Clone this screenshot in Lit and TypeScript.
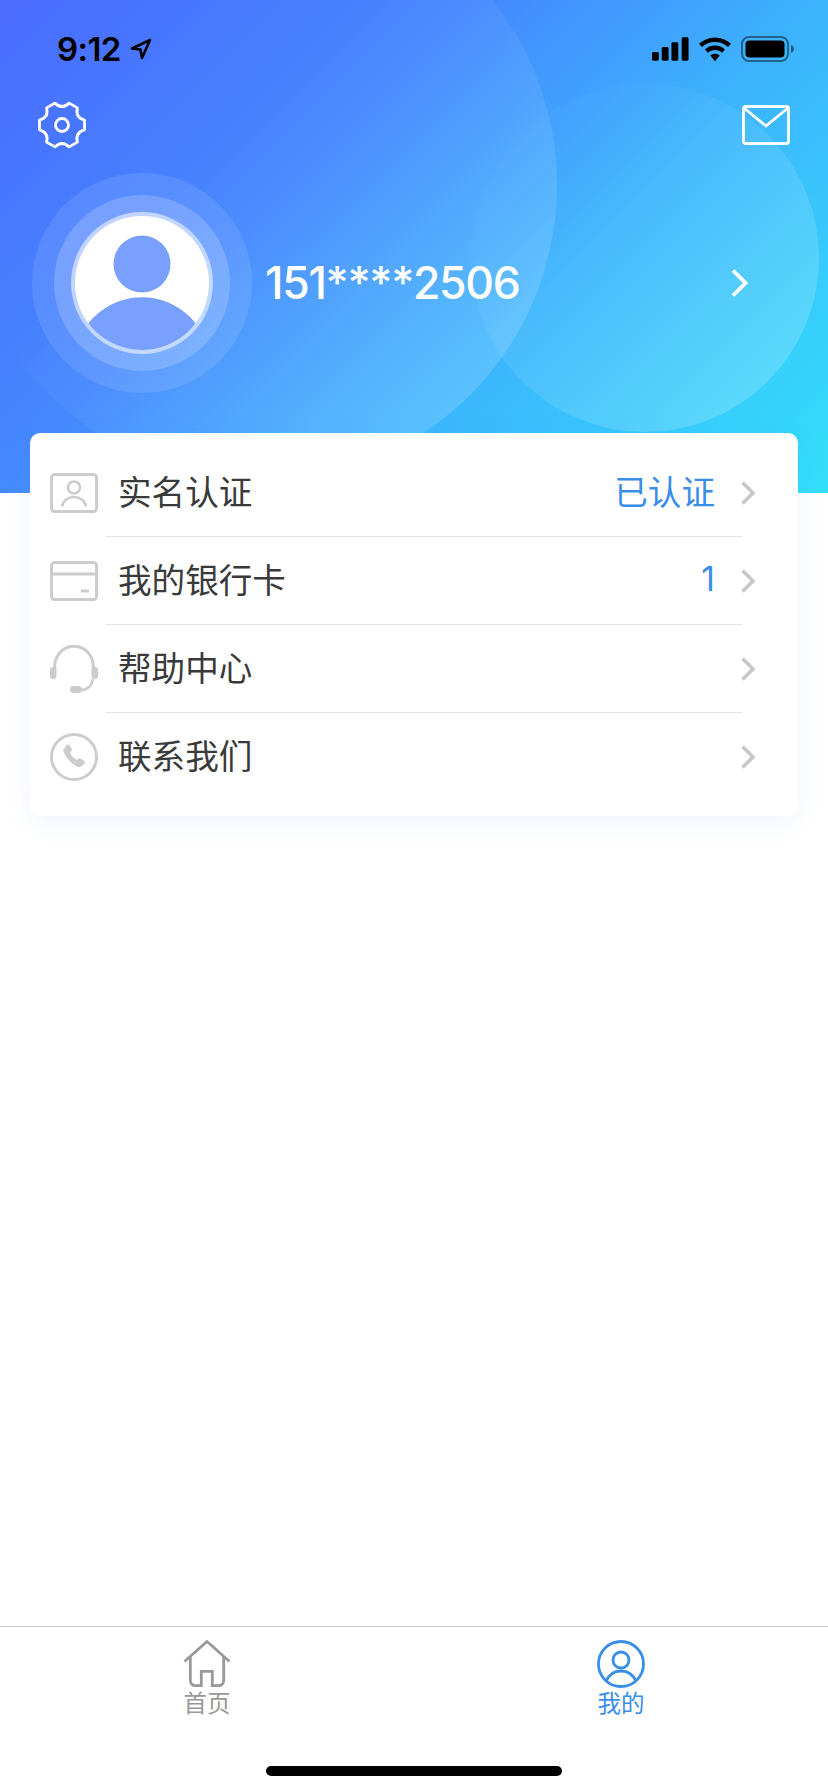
import { LitElement, html, css, svg } from "lit";
import { customElement } from "lit/decorators.js";

function gearPath(): string {
  const c = 24;
  const pt = (r: number, deg: number) => {
    const a = (deg * Math.PI) / 180;
    return `${(c + r * Math.cos(a)).toFixed(2)} ${(c + r * Math.sin(a)).toFixed(2)}`;
  };
  let d = "";
  for (let k = 0; k < 6; k++) {
    const a = 60 * k;
    d += k === 0 ? `M${pt(23, a - 12)}` : `L${pt(23, a - 12)}`;
    d += ` L${pt(23, a + 12)} Q${pt(15, a + 30)} ${pt(23, a + 48)} `;
  }
  return d + "Z";
}

const chevron = html`<svg class="chev" viewBox="0 0 16 26" width="16" height="26"><path d="M2.5 2.5 13 13 2.5 23.5" fill="none" stroke="#c7c7cc" stroke-width="3.6"/></svg>`;

const icons = {
  id: svg`<rect x="1.500" y="1.500" width="45" height="37" rx="3" fill="none" stroke="#ccc" stroke-width="2.900"/><circle cx="24" cy="14.500" r="6" fill="none" stroke="#ccc" stroke-width="2.500"/><path d="M12 33.500c1-6 6-9.500 12-9.500s11 3.500 12 9.500" fill="none" stroke="#ccc" stroke-width="2.500"/>`,
  card: svg`<rect x="1.500" y="1.500" width="45" height="37" rx="3" fill="none" stroke="#ccc" stroke-width="2.900"/><path d="M1.500 13h45" stroke="#ccc" stroke-width="2.900"/><path d="M31 30h8" stroke="#ccc" stroke-width="2.900"/>`,
  help: svg`<path d="M5 26C3 12 12 1.300 24 1.300S45 12 43 26" fill="none" stroke="#ccc" stroke-width="2.900"/><rect x="0" y="22" width="6.500" height="12" rx="3.200" fill="#ccc"/><rect x="41.500" y="22" width="6.500" height="12" rx="3.200" fill="#ccc"/><path d="M43 34c-1 6-5 11-12 11" fill="none" stroke="#ccc" stroke-width="2.600"/><rect x="20" y="41" width="12" height="7" rx="3.500" fill="#ccc"/>`,
  phone: svg`<circle cx="24" cy="24" r="22.500" fill="none" stroke="#ccc" stroke-width="2.900"/><path d="M14.500 15c-1 1-1.500 2-1 3.500 2 6 7.500 12 13.500 15 2 .8 3.500.8 5-.500l2.500-2.500c.8-.8.700-1.800-.2-2.500l-3.800-2.500c-.8-.5-1.500-.4-2.200.2l-1.300 1.300c-3-1.500-5.500-4-7-7.500l1.500-1.500c.6-.7.7-1.400.2-2.200l-2.500-3.800c-.7-.9-1.700-1-2.500-.2z" fill="#ccc"/>`,
};

interface Row { icon: keyof typeof icons; h: number; label: string; value?: string; }
const rows: Row[] = [
  { icon: "id", h: 40, label: "实名认证", value: "已认证" },
  { icon: "card", h: 40, label: "我的银行卡", value: "1" },
  { icon: "help", h: 48, label: "帮助中心" },
  { icon: "phone", h: 48, label: "联系我们" },
];

@customElement("app-root")
export class AppRoot extends LitElement {
  static styles = css`
    :host { display: block; width: 828px; height: 1792px; background: #fff; font-family: Inter, "Noto Sans CJK SC", sans-serif; overflow: hidden; }
    .page { height: 1792px; display: flex; flex-direction: column; position: relative; }
    .head { height: 493px; flex: none; position: relative; overflow: hidden; background: linear-gradient(135deg, #4a6bff 0%, #4588ff 36%, #3cb4fd 63%, #33dffa 100%); }
    .blob { position: absolute; border-radius: 50%; }
    .b1 { left: -37px; top: -112px; width: 594px; height: 594px; background: linear-gradient(135deg, rgba(255,255,255,0) 42%, rgba(255,255,255,0.17) 90%); }
    .b2 { left: 471px; top: 84px; width: 348px; height: 348px; background: linear-gradient(135deg, rgba(255,255,255,0.02) 25%, rgba(255,255,255,0.2) 92%); }
    .status { position: relative; height: 98px; display: flex; align-items: center; justify-content: space-between; padding: 0 34px 0 57px; color: #000; }
    .time { display: flex; align-items: center; gap: 9px; font-size: 33px; font-weight: 600; letter-spacing: -0.6px; }
    .sys { display: flex; align-items: center; gap: 10px; }
    .tools { position: relative; margin-top: 2px; height: 50px; display: flex; align-items: center; justify-content: space-between; padding: 0 38px; }
    .hero { position: relative; margin-top: 23px; display: flex; align-items: center; padding: 0 80px 0 32px; }
    .ava { width: 220px; height: 220px; flex: none; }
    .name { flex: 1; margin-left: 13px; color: #fff; font-size: 44.500px; font-weight: 500; letter-spacing: -1.300px; }
    .card { position: relative; flex: none; margin: -60px 30px 0; padding: 16px 0 16.500px; background: #fff; border-radius: 10px; box-shadow: 0 6px 26px rgba(70,140,255,0.09); }
    .row { height: 86.500px; box-sizing: border-box; display: flex; align-items: center; padding: 1.500px 42px 0 20px; }
    .ic { width: 48px; flex: none; display: block; }
    .label { flex: 1; margin-left: 20px; padding-bottom: 4.500px; font-size: 33.600px; color: #3a3a3a; }
    .value { font-size: 33.600px; padding-bottom: 4.500px; color: #3a8ee8; margin-right: 25px; }
    .chev { display: block; flex: none; }
    .sep { height: 1.500px; margin: 0 56px 0 76px; background: #e4e4e4; }
    .tabs { margin-top: auto; height: 166px; border-top: 1.500px solid #ccc; display: flex; box-sizing: border-box; }
    .tab { flex: 1; display: flex; flex-direction: column; align-items: center; padding-top: 13px; font-size: 23.500px; line-height: 28px; color: #999; }
    .tab.on { color: #3a8ee8; }
    .tab svg { display: block; margin-bottom: 2px; }
    .bar { position: absolute; left: 266px; bottom: 16px; width: 296px; height: 10px; border-radius: 5px; background: #000; }
  `;

  render() {
    return html`<div class="page">
      <div class="head">
        <div class="blob b1"></div>
        <div class="blob b2"></div>
        <div class="status">
          <div class="time">9:12
            <svg width="22" height="22" viewBox="0 0 22 22"><path d="M20 2 2 10.500l8.500 1 1.500 8.500z" fill="none" stroke="#000" stroke-width="2.600" stroke-linejoin="round"/></svg>
          </div>
          <div class="sys">
            <svg width="37" height="24" viewBox="0 0 38 24"><rect x="0" y="15" width="7" height="9" rx="1.500"/><rect x="10" y="10" width="7" height="14" rx="1.500"/><rect x="20" y="5" width="7" height="19" rx="1.500"/><rect x="30.500" y="0" width="7" height="24" rx="1.500"/></svg>
            <svg width="32" height="25" viewBox="0 0 33 25"><path d="M16.500 0C10 0 4.500 2.500 0 6.500L3 10c3.500-3.300 8.200-5.300 13.500-5.300S26.500 6.700 30 10l3-3.500C28.500 2.500 23 0 16.500 0z"/><path d="M16.500 8.500c-4 0-7.600 1.500-10.300 4l3 3.400c2-1.800 4.500-2.800 7.300-2.800s5.300 1 7.300 2.800l3-3.400c-2.700-2.500-6.300-4-10.300-4z"/><path d="M16.500 17c-1.800 0-3.500.7-4.800 1.800l4.800 5.700 4.800-5.700c-1.300-1.100-3-1.800-4.800-1.800z"/></svg>
            <svg width="53" height="26" viewBox="0 0 53 26"><rect x="1" y="1" width="46" height="24" rx="7" fill="none" stroke="#000" stroke-opacity="0.45" stroke-width="2"/><rect x="4.500" y="4.500" width="39" height="17" rx="4"/><path d="M50 9c1.800.6 3 2.200 3 4s-1.200 3.400-3 4z" fill-opacity="0.5"/></svg>
          </div>
        </div>
        <div class="tools">
          <svg width="48" height="48" viewBox="0 0 48 48"><path d=${gearPath()} fill="none" stroke="#fff" stroke-width="2.800" stroke-linejoin="round"/><circle cx="24" cy="24" r="6.500" fill="none" stroke="#fff" stroke-width="2.800"/></svg>
          <svg width="48" height="40" viewBox="0 0 48 40"><rect x="1.500" y="1.500" width="45" height="37" rx="2" fill="none" stroke="#fff" stroke-width="2.800"/><path d="M2 3 24 21 46 3" fill="none" stroke="#fff" stroke-width="2.800"/></svg>
        </div>
        <div class="hero">
          <svg class="ava" viewBox="0 0 220 220">
            <defs><clipPath id="inner"><circle cx="110" cy="110" r="67"/></clipPath></defs>
            <circle cx="110" cy="110" r="110" fill="#fff" fill-opacity="0.1"/>
            <circle cx="110" cy="110" r="88" fill="#fff" fill-opacity="0.18"/>
            <circle cx="110" cy="110" r="71" fill="#fff" fill-opacity="0.55"/>
            <circle cx="110" cy="110" r="67" fill="#fff"/>
            <circle cx="110" cy="91" r="28.500" fill="#7aa0ff"/>
            <circle cx="110" cy="193" r="68.700" fill="#7aa0ff" clip-path="url(#inner)"/>
          </svg>
          <div class="name">151****2506</div>
          <svg width="18" height="30" viewBox="0 0 18 30"><path d="M3 2.500 15.500 15 3 27.500" fill="none" stroke="#fff" stroke-width="3.800"/></svg>
        </div>
      </div>
      <div class="card">
        ${rows.map((r, i) => html`
          ${i ? html`<div class="sep"></div>` : ""}
          <div class="row">
            <svg class="ic" width="48" height=${r.h} viewBox="0 0 48 ${r.h}">${icons[r.icon]}</svg>
            <div class="label">${r.label}</div>
            ${r.value ? html`<div class="value">${r.value}</div>` : ""}
            ${chevron}
          </div>`)}
      </div>
      <div class="tabs">
        <div class="tab">
          <svg width="48" height="48" viewBox="0 0 48 48"><path d="M1.500 21.500 24 1.500l22.500 20" fill="none" stroke="#999" stroke-width="2.800"/><path d="M7.300 17V40q0 5.700 5.700 5.700H18.300V31.300H29.300V45.700H35q5.700 0 5.700-5.700V17" fill="none" stroke="#999" stroke-width="2.800"/></svg>
          首页
        </div>
        <div class="tab on">
          <svg width="48" height="48" viewBox="0 0 48 48"><circle cx="24" cy="24" r="22.500" fill="none" stroke="#3a8ee8" stroke-width="2.800"/><circle cx="24" cy="20" r="8" fill="none" stroke="#3a8ee8" stroke-width="2.800"/><path d="M9 41.500C12 34 18 31 24 31S36 34 39 41.500" fill="none" stroke="#3a8ee8" stroke-width="2.800"/></svg>
          我的
        </div>
      </div>
      <div class="bar"></div>
    </div>`;
  }
}
